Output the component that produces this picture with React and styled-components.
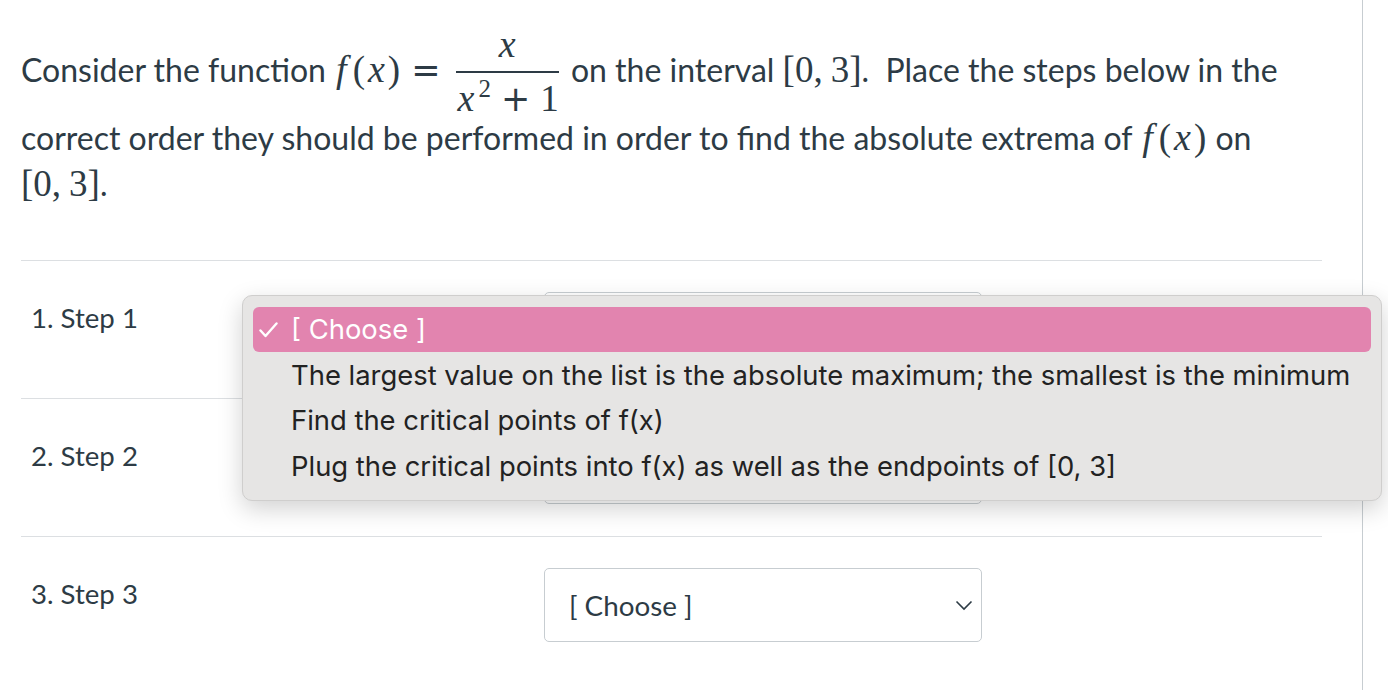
import styled, { createGlobalStyle } from 'styled-components'

const GlobalStyle = createGlobalStyle`
  body {
    margin: 0;
    background: #fff;
    font-family: Lato, "Open Sans", sans-serif;
    color: #2d3b45;
  }
`

const options = [
  'The largest value on the list is the absolute maximum; the smallest is the minimum',
  'Find the critical points of f(x)',
  'Plug the critical points into f(x) as well as the endpoints of [0, 3]',
]

const Chevron = () => (
  <svg width="18" height="11" viewBox="0 0 18 11">
    <path d="M1.5 1.5 L9 9 L16.5 1.5" fill="none" stroke="#2d3b45" strokeWidth="1.6" />
  </svg>
)

const CheckIcon = () => (
  <svg width="19" height="16" viewBox="0 0 19 16">
    <path d="M1.5 8.5 L6.5 14 L17.5 1.5" fill="none" stroke="#fff" strokeWidth="2.4" strokeLinecap="round" strokeLinejoin="round" />
  </svg>
)

const FofX = () => (
  <M>
    <Var $f>f</Var>
    <Paren>(</Paren>
    <Var>x</Var>
    <Paren>)</Paren>
  </M>
)

const Interval = () => (
  <M>
    [0,<Thin />3]
  </M>
)

const Fraction = ({ num, den }) => (
  <Frac>
    <FracPart>{num}</FracPart>
    <Bar />
    <FracPart>{den}</FracPart>
  </Frac>
)

const Step = ({ n, children }) => (
  <Row>
    <StepLabel>
      {n}. Step {n}
    </StepLabel>
    <SelectBox>
      <span>[ Choose ]</span>
      <Chevron />
    </SelectBox>
    {children}
  </Row>
)

const App = () => {
  return (
    <>
      <GlobalStyle />
      <Page>
        <Question>
          Consider the function <FofX />
          <Op>=</Op>
          <Fraction
            num={<Var>x</Var>}
            den={
              <>
                <Var>x</Var>
                <Sup>2</Sup>
                <Op>+</Op>1
              </>
            }
          />{' '}
          on the interval <Interval />. &nbsp;Place the steps below in the correct order they should be
          performed in order to find the absolute extrema of <FofX /> on <Interval />.
        </Question>
        <Steps>
          <Step n={1}>
            <Menu>
              <Option $active>
                <Check>
                  <CheckIcon />
                </Check>
                [ Choose ]
              </Option>
              {options.map((o) => (
                <Option key={o}>{o}</Option>
              ))}
            </Menu>
          </Step>
          <Step n={2} />
          <Step n={3} />
        </Steps>
      </Page>
    </>
  )
}

export default App

const Page = styled.div`
  width: 1363px;
  min-height: 690px;
  box-sizing: border-box;
  border-right: 1px solid #c7cdd1;
  padding: 25px 40px 0 21px;
`

const Question = styled.p`
  margin: 0;
  font-size: 32px;
  line-height: 46px;
`

const M = styled.span`
  font-family: "Liberation Serif", "Times New Roman", serif;
  font-size: 37px;
  line-height: 1;
  white-space: nowrap;
`

const Var = styled.i`
  font-family: "Liberation Serif", "Times New Roman", serif;
  font-size: 38px;
  line-height: 1;
  margin: ${(p) => (p.$f ? '0 5px 0 2px' : '0 2px')};
`

const Paren = styled.span`
  margin: 0 1px;
`

const Thin = styled.span`
  display: inline-block;
  width: 8px;
`

const Op = styled.span`
  font-family: "DejaVu Sans", sans-serif;
  font-size: 35px;
  margin: 0 10px;
  line-height: 1;
`

const Sup = styled.sup`
  font-size: 25px;
  line-height: 0;
  margin-left: 2px;
`

const Frac = styled.span`
  display: inline-flex;
  flex-direction: column;
  align-items: center;
  vertical-align: 25px;
  margin: 0 4px 0 5px;
  padding-bottom: 8px;
  font-family: "Liberation Serif", serif;
  font-size: 37px;
`

const FracPart = styled.span`
  display: block;
  height: 28px;
  line-height: 28px;
  white-space: nowrap;
`

const Bar = styled.span`
  align-self: stretch;
  height: 1.5px;
  background: #2d3b45;
  margin: 18px 0 6px;
`

const Steps = styled.div`
  margin-top: 53px;
`

const Row = styled.div`
  position: relative;
  display: flex;
  align-items: flex-start;
  padding: 31px 0 32px 10px;
  border-top: 1px solid #dcdfe2;
`

const StepLabel = styled.div`
  width: 513px;
  font-size: 27.6px;
  line-height: 32px;
  padding-top: 10px;
`

const SelectBox = styled.div`
  width: 438px;
  height: 74px;
  box-sizing: border-box;
  display: flex;
  align-items: center;
  justify-content: space-between;
  padding: 0 8px 0 24px;
  border: 1px solid #c7cdd1;
  border-radius: 5px;
  background: #fff;
  font-size: 27.8px;
  color: #2d3b45;

  span {
    padding-top: 2px;
  }

  svg {
    margin-top: 2px;
  }
`

const Menu = styled.div`
  position: absolute;
  left: 221px;
  top: 34px;
  width: 1140px;
  box-sizing: border-box;
  padding: 11px 10px 11px;
  background: #e6e5e4;
  border: 1px solid #cfcecd;
  border-radius: 10px;
  box-shadow: 0 8px 24px rgba(0, 0, 0, 0.18);
  font-family: Inter, "Noto Sans", sans-serif;
  z-index: 2;
`

const Option = styled.div`
  display: flex;
  align-items: center;
  height: 45.5px;
  padding-left: 38px;
  border-radius: 6px;
  font-size: 27.4px;
  color: ${(p) => (p.$active ? '#fff' : '#222')};
  background: ${(p) => (p.$active ? '#e284af' : 'transparent')};
  position: relative;
`

const Check = styled.span`
  position: absolute;
  left: 6px;
  top: 15px;
  display: flex;
`
